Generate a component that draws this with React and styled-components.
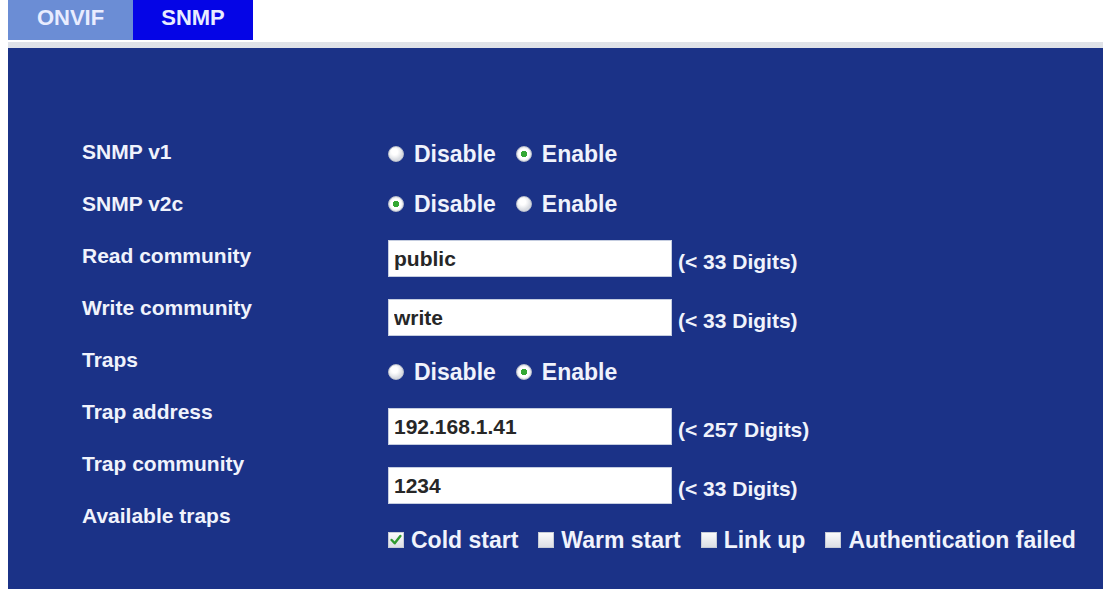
import React from "react";
import styled, { createGlobalStyle } from "styled-components";

const GlobalStyle = createGlobalStyle`
  html, body {
    margin: 0;
    padding: 0;
    background: #ffffff;
    overflow: hidden;
  }
  body {
    font-family: "Liberation Sans", Arial, sans-serif;
  }
`;

const LABELS = [
  "SNMP v1",
  "SNMP v2c",
  "Read community",
  "Write community",
  "Traps",
  "Trap address",
  "Trap community",
  "Available traps",
];

const TRAPS = [
  { name: "Cold start", checked: true },
  { name: "Warm start", checked: false },
  { name: "Link up", checked: false },
  { name: "Authentication failed", checked: false },
];

const RadioPair = ({ enabled }) => (
  <FieldRow $radio>
    <Option>
      <RadioDot $checked={!enabled} />
      Disable
    </Option>
    <Option>
      <RadioDot $checked={enabled} />
      Enable
    </Option>
  </FieldRow>
);

const TextField = ({ value, hint }) => (
  <FieldRow>
    <Input defaultValue={value} />
    <Hint>{hint}</Hint>
  </FieldRow>
);

const App = () => {
  return (
    <Page>
      <GlobalStyle />
      <TabBar>
        <Tab>ONVIF</Tab>
        <Tab $active>SNMP</Tab>
      </TabBar>
      <Panel>
        <Form>
          <LabelColumn>
            {LABELS.map((label) => (
              <Label key={label}>{label}</Label>
            ))}
          </LabelColumn>
          <FieldColumn>
            <RadioPair enabled />
            <RadioPair enabled={false} />
            <TextField value="public" hint="(< 33 Digits)" />
            <TextField value="write" hint="(< 33 Digits)" />
            <RadioPair enabled />
            <TextField value="192.168.1.41" hint="(< 257 Digits)" />
            <TextField value="1234" hint="(< 33 Digits)" />
            <FieldRow $radio>
              {TRAPS.map((trap) => (
                <Option key={trap.name} $wide>
                  <CheckBox $checked={trap.checked}>
                    {trap.checked && (
                      <svg width="12" height="12" viewBox="0 0 11 11">
                        <path
                          d="M1.5 5.5 L4.3 8.5 L9.5 1.8"
                          fill="none"
                          stroke="#2f9a2f"
                          strokeWidth="2.2"
                          strokeLinecap="round"
                          strokeLinejoin="round"
                        />
                      </svg>
                    )}
                  </CheckBox>
                  {trap.name}
                </Option>
              ))}
            </FieldRow>
          </FieldColumn>
        </Form>
      </Panel>
    </Page>
  );
};

export default App;

const Page = styled.div`
  padding-left: 8px;
  height: 100vh;
  display: flex;
  flex-direction: column;
  box-sizing: border-box;
`;

// tabs
const TabBar = styled.div`
  display: flex;
  height: 40px;
  margin-bottom: 2px;
`;

const Tab = styled.div`
  width: ${(p) => (p.$active ? "120px" : "125px")};
  background: ${(p) => (p.$active ? "#0505e6" : "#6b8dd5")};
  color: #e8ecff;
  font-size: 22px;
  font-weight: 700;
  line-height: 36px;
  text-align: center;
`;

// blue settings panel
const Panel = styled.div`
  flex: 1;
  background: #1b3287;
  border-top: 6px solid #6d7386;
  border-image: linear-gradient(#dfe2e8, #7c8294 45%, #2b3a78) 1;
  border-left: 0;
  border-right: 0;
  border-bottom: 0;
`;

const Form = styled.div`
  display: flex;
  padding: 90px 0 0 74px;
  color: #f0f3fc;
  font-size: 21px;
  font-weight: 700;
`;

const LabelColumn = styled.div`
  width: 306px;
  display: flex;
  flex-direction: column;
  gap: 24px;
`;

const Label = styled.div`
  line-height: 28px;
  white-space: nowrap;
`;

const FieldColumn = styled.div`
  display: flex;
  flex-direction: column;
  gap: 22px;
  padding-top: 2px;
`;

const FieldRow = styled.div`
  display: flex;
  align-items: center;
  height: ${(p) => (p.$radio ? "28px" : "37px")};
  white-space: nowrap;
`;

const Option = styled.label`
  display: flex;
  align-items: center;
  gap: ${(p) => (p.$wide ? "7px" : "10px")};
  margin-right: ${(p) => (p.$wide ? "20px" : "20px")};
  line-height: 28px;
  font-size: 23px;
`;

const RadioDot = styled.span`
  width: 16px;
  height: 16px;
  border-radius: 50%;
  box-sizing: border-box;
  border: 1px solid #b9bfcc;
  background: ${(p) =>
    p.$checked
      ? "radial-gradient(circle, #34a834 0 3px, #ffffff 3.5px 5px, #e4e6ea 7px)"
      : "radial-gradient(circle at 40% 35%, #ffffff 0 3px, #f1f2f4 5px, #d9dce2 8px)"};
`;

const CheckBox = styled.span`
  width: 16px;
  height: 16px;
  box-sizing: border-box;
  border: 1px solid #c7ccd6;
  background: linear-gradient(#fbfbfc, #dcdfe5);
  display: flex;
  align-items: center;
  justify-content: center;
`;

const Input = styled.input`
  width: 284px;
  height: 37px;
  box-sizing: border-box;
  border: 1px solid #c5cde0;
  background: #ffffff;
  padding: 0 5px;
  font-family: "Liberation Sans", Arial, sans-serif;
  font-size: 21px;
  font-weight: 700;
  color: #272727;
  outline: none;
`;

const Hint = styled.span`
  margin-left: 6px;
  padding-top: 6px;
`;
